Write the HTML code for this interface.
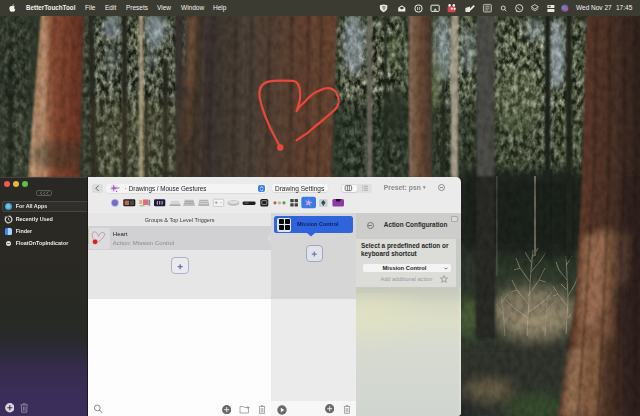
<!DOCTYPE html>
<html><head><meta charset="utf-8">
<style>
*{margin:0;padding:0;box-sizing:border-box}
html,body{width:640px;height:416px;overflow:hidden;background:#2e3a2a;font-family:"Liberation Sans",sans-serif}
.abs{position:absolute}
#bg{position:absolute;left:0;top:0;width:640px;height:416px}
#menubar{position:absolute;left:0;top:0;width:640px;height:16px;background:#3c3b31;color:#f2f2ee;font-size:6.5px;white-space:nowrap}
#menubar span{position:absolute;top:4px;line-height:8px}
#win{position:absolute;left:0;top:177px;width:460.5px;height:239px;border-top-right-radius:5px;border-bottom-right-radius:4px;overflow:hidden}
#side{position:absolute;left:0;top:0;width:88px;height:239px;background:linear-gradient(#292824 0%,#2a2923 33%,#272a23 55%,#272a26 65%,#2c2a36 72%,#362c4e 80%,#3b2d58 90%,#3c2e5c 100%)}
#main{position:absolute;left:88px;top:0;width:373px;height:239px;background:#ebebeb}
.t{position:absolute;white-space:nowrap;line-height:1}
</style></head><body>
<svg id="bg" width="640" height="416" viewBox="0 0 640 416">
<defs>
<filter id="b05" x="-20%" y="-20%" width="140%" height="140%"><feGaussianBlur stdDeviation="0.7"/></filter>
<filter id="b1" x="-20%" y="-5%" width="140%" height="110%"><feGaussianBlur stdDeviation="1.2"/></filter>
<filter id="b2" x="-50%" y="-50%" width="200%" height="200%"><feGaussianBlur stdDeviation="3"/></filter>
<filter id="b3" x="-50%" y="-50%" width="200%" height="200%"><feGaussianBlur stdDeviation="7"/></filter>
<filter id="tex" x="0" y="0" width="100%" height="100%"><feTurbulence type="fractalNoise" baseFrequency="0.18 0.12" numOctaves="2" seed="3"/><feColorMatrix type="matrix" values="0 0 0 0 0  0 0 0 0 0  0 0 0 0 0  0 0 0 -1.6 1.05"/></filter>
<linearGradient id="lt" x1="0" x2="1"><stop offset="0" stop-color="#a88060"/><stop offset="0.08" stop-color="#caa07c"/><stop offset="0.18" stop-color="#b08464"/><stop offset="0.28" stop-color="#c09474"/><stop offset="0.38" stop-color="#9a6244"/><stop offset="0.48" stop-color="#864a32"/><stop offset="0.75" stop-color="#7a402c"/><stop offset="1" stop-color="#643224"/></linearGradient>
<linearGradient id="ct" x1="0" x2="1"><stop offset="0" stop-color="#3e322a"/><stop offset="0.07" stop-color="#46382e"/><stop offset="0.2" stop-color="#3e3630"/><stop offset="0.45" stop-color="#4e4238"/><stop offset="0.62" stop-color="#584234"/><stop offset="0.8" stop-color="#654332"/><stop offset="1" stop-color="#6a4634"/></linearGradient>
<linearGradient id="rt" x1="0" x2="1"><stop offset="0" stop-color="#4a2c20"/><stop offset="0.3" stop-color="#5e3a2a"/><stop offset="0.65" stop-color="#4a3228"/><stop offset="1" stop-color="#30241e"/></linearGradient>
<linearGradient id="rtl" x1="0" x2="1"><stop offset="0" stop-color="#8a6048"/><stop offset="0.4" stop-color="#a87858"/><stop offset="1" stop-color="#5a3a2a"/></linearGradient>
<linearGradient id="t9" x1="0" x2="1"><stop offset="0" stop-color="#8a7058"/><stop offset="0.5" stop-color="#6a4a36"/><stop offset="1" stop-color="#4a3a2e"/></linearGradient>
<filter id="fol" x="0" y="16" width="640" height="162" filterUnits="userSpaceOnUse" color-interpolation-filters="sRGB">
 <feTurbulence type="fractalNoise" baseFrequency="0.22 0.14" numOctaves="3" seed="11" result="n"/>
 <feColorMatrix in="n" type="matrix" values="1.9 0 0 0 -0.575  1.9 0 0 0 -0.56  1.8 0 0 0 -0.59  0 0 0 0 1"/>
</filter>
<mask id="folmask" maskUnits="userSpaceOnUse" x="0" y="0" width="640" height="416">
 <g filter="url(#b3)">
 <rect x="0" y="16" width="30" height="161" fill="#505050"/>
 <rect x="86" y="16" width="100" height="90" fill="#bbb"/>
 <rect x="86" y="100" width="100" height="77" fill="#888"/>
 <rect x="336" y="16" width="72" height="90" fill="#ccc"/>
 <rect x="336" y="100" width="72" height="77" fill="#555"/>
 <rect x="432" y="16" width="46" height="90" fill="#ccc"/>
 <rect x="432" y="100" width="46" height="77" fill="#555"/>
 <rect x="494" y="16" width="92" height="100" fill="#ccc"/>
 <rect x="494" y="110" width="92" height="67" fill="#888"/>
 </g>
</mask>
</defs>
<rect x="0" y="0" width="640" height="416" fill="#2f3a2c"/>
<g filter="url(#b3)">
 <rect x="0" y="16" width="30" height="161" fill="#2c3228"/>
 <rect x="0" y="110" width="28" height="67" fill="#3a4236"/>
 <rect x="86" y="16" width="100" height="161" fill="#404a3c"/>
 <rect x="336" y="16" width="72" height="90" fill="#44503e"/>
 <rect x="336" y="100" width="72" height="77" fill="#283226"/>
 <rect x="432" y="16" width="46" height="90" fill="#4e5a44"/>
 <rect x="432" y="100" width="46" height="77" fill="#2c3628"/>
 <rect x="494" y="20" width="90" height="100" fill="#505c44"/>
 <rect x="494" y="110" width="90" height="67" fill="#3a4632"/>
</g>
<rect x="0" y="16" width="640" height="162" fill="#000" filter="url(#fol)" mask="url(#folmask)" opacity="0.8"/>
<g filter="url(#b2)">
 <ellipse cx="112" cy="28" rx="9" ry="12" fill="#a8b8c8" opacity="0.55"/>
 <ellipse cx="156" cy="30" rx="11" ry="16" fill="#a8b8c8" opacity="0.6"/>
 <ellipse cx="152" cy="55" rx="6" ry="14" fill="#8a9aa4" opacity="0.35"/>
 <ellipse cx="112" cy="60" rx="8" ry="14" fill="#7a8a90" opacity="0.35"/>
 <ellipse cx="354" cy="45" rx="11" ry="30" fill="#a8b8c4" opacity="0.6"/>
 <ellipse cx="443" cy="50" rx="9" ry="34" fill="#a8b8c4" opacity="0.55"/>
 <ellipse cx="557" cy="55" rx="8" ry="36" fill="#b0c0d0" opacity="0.65"/>
 <ellipse cx="535" cy="30" rx="10" ry="12" fill="#a0b4c4" opacity="0.4"/>
 <ellipse cx="468" cy="50" rx="7" ry="24" fill="#a0b0b8" opacity="0.45"/>
 <ellipse cx="518" cy="100" rx="22" ry="34" fill="#7a8860" opacity="0.3"/>
 <ellipse cx="395" cy="110" rx="12" ry="25" fill="#2a3424" opacity="0.8"/>
 
 
</g>
<g filter="url(#b2)">
 <ellipse cx="432" cy="80" rx="10" ry="30" fill="#7a8a5a" opacity="0.45"/>
 <ellipse cx="395" cy="50" rx="8" ry="18" fill="#6a7a52" opacity="0.4"/>
 <ellipse cx="600" cy="20" rx="1" ry="1" fill="#000" opacity="0"/>
</g>
<!-- right-bottom scene -->
<g filter="url(#b3)">
 <rect x="455" y="170" width="130" height="85" fill="#1c231c"/>
 <rect x="455" y="250" width="25" height="60" fill="#2e362c"/>
 <ellipse cx="533" cy="312" rx="46" ry="26" fill="#988c72" opacity="0.8"/>
 <ellipse cx="540" cy="324" rx="30" ry="12" fill="#b0a080" opacity="0.55"/>
 <rect x="455" y="342" width="120" height="80" fill="#32342f"/>
 <rect x="455" y="380" width="22" height="40" fill="#262c2c"/>
 <ellipse cx="469" cy="318" rx="8" ry="18" fill="#58703e"/>
 <ellipse cx="488" cy="390" rx="24" ry="8" fill="#7a6e52" opacity="0.9"/>
 <ellipse cx="535" cy="408" rx="30" ry="12" fill="#38502e"/>
</g>
<g filter="url(#b05)" opacity="0.55">
 <path d="M527 336 L529 300 L531 270 L533 250 M529 305 L517 290 L512 280 M528 296 L539 280 L545 268 M530 282 L520 268 L516 258 M531 272 L541 260 L546 252 M528 318 L514 308 L506 300 M529 312 L545 300 L552 292 M531 262 L525 252 M532 258 L538 248 M517 290 L511 292 M539 280 L546 282 M520 268 L514 270" stroke="#d0c0a0" stroke-width="0.9" fill="none"/>
 <path d="M566 334 L568 300 L567 275 L566 256 M567 306 L558 294 L553 286 M568 296 L575 284 L578 276 M567 280 L559 270 L556 262 M568 318 L576 308 M566 266 L572 256 M567 290 L561 284 M558 294 L553 296" stroke="#d4c4a4" stroke-width="0.9" fill="none"/>
 <path d="M505 336 L503 310 L501 296 M504 316 L496 304 M504 322 L512 312 M502 302 L508 294 M545 336 L546 310 L548 296 M546 318 L538 308 M546 312 L554 302" stroke="#b8a890" stroke-width="0.8" fill="none"/>
 <rect x="534" y="176" width="2" height="80" fill="#a8a08c"/>
 <rect x="496" y="176" width="1.6" height="100" fill="#6a6a5c"/>
</g>
<!-- trunks -->
<g filter="url(#b1)">
 <polygon points="41,14 84,14 80,178 28,178" fill="url(#lt)"/>
 <polygon points="88,14 93,14 97,178 91,178" fill="#2a2a24"/>
 <rect x="163" y="60" width="5" height="118" fill="#2a2a24"/>
 <rect x="122" y="14" width="5" height="164" fill="#2a2a22"/>
 <rect x="139" y="14" width="4" height="164" fill="#b4a686"/>
 <rect x="145" y="96" width="3" height="82" fill="#2e2e28"/>
 <rect x="175" y="14" width="8" height="164" fill="#3a3630"/>
 <polygon points="187,14 337,14 331,178 178,178" fill="url(#ct)"/>
 <rect x="367" y="14" width="5" height="164" fill="#6e6a60"/>
 <rect x="384" y="14" width="3" height="164" fill="#2a2e26"/>
 <rect x="442" y="80" width="3" height="98" fill="#262a22"/>
 <rect x="8" y="60" width="5" height="118" fill="#1e221c" opacity="0.75"/>
 <rect x="409" y="14" width="23" height="164" fill="url(#t9)"/>
 <rect x="451" y="14" width="7" height="164" fill="#aaa290"/>
 <rect x="477" y="14" width="17" height="164" fill="#4e4e48"/><rect x="476" y="176" width="19" height="162" fill="#2a2a26"/>
 <rect x="545" y="14" width="5" height="246" fill="#1e221c"/>
 <rect x="566" y="14" width="6" height="246" fill="#22261e"/>
 <polygon points="587,14 642,14 642,418 558,418 576,296 582,176" fill="url(#rt)"/>
</g>
<g filter="url(#b2)">
 <polygon points="582,236 614,228 612,340 574,345" fill="#9a6c4c" opacity="0.6"/>
 <polygon points="574,345 604,338 600,418 560,418" fill="#a07654" opacity="0.6"/>
 <rect x="622" y="176" width="20" height="242" fill="#2e221c" opacity="0.6"/>
 <polygon points="583,238 606,230 607,300 592,332 579,322" fill="#b08060" opacity="0.55"/>
 <polygon points="568,350 584,345 580,416 561,416" fill="#b08a68" opacity="0.45"/>
 <polygon points="612,236 630,232 628,280 614,290" fill="#8a6048" opacity="0.35"/>
</g>
<g filter="url(#b1)" opacity="0.45">
 <path d="M198 16 L192 177 M214 16 L208 177 M236 16 L233 177 M252 16 L250 177 M270 16 L266 177 M292 16 L290 177 M309 16 L306 177 M322 16 L318 177" stroke="#2a221e" stroke-width="2.2" fill="none"/>
 <path d="M205 16 L200 177 M244 16 L242 177 M282 16 L279 177 M315 16 L312 177" stroke="#7a6250" stroke-width="1.6" fill="none" opacity="0.6"/>
 <path d="M55 16 L42 177 M66 16 L58 177 M74 16 L68 177" stroke="#4a2a20" stroke-width="1.6" fill="none" opacity="0.6"/>
</g>
<g filter="url(#b1)" opacity="0.35">
 <path d="M596 16 L594 176 L586 300 L578 416 M610 16 L609 176 L604 300 L598 416 M624 16 L624 176 L620 300 L616 416 M636 16 L636 416" stroke="#24180f" stroke-width="2.4" fill="none"/>
</g>
<g filter="url(#b2)">
 <polygon points="189,16 197,16 193,90 186,90" fill="#a07048" opacity="0.55"/>
 <polygon points="185,95 194,95 190,140 183,140" fill="#6a4a34" opacity="0.6"/>
</g>
<g filter="url(#b3)">
 <rect x="90" y="100" width="90" height="77" fill="#7a6a38" opacity="0.18"/>
</g>
<!-- branches across left trunk -->
<g filter="url(#b2)">
 <ellipse cx="60" cy="155" rx="30" ry="14" fill="#2a3424" opacity="0.35"/>
 
</g>
<rect x="0" y="16" width="640" height="400" filter="url(#tex)" opacity="0.25"/>
<path d="M280.3 147.5 L276 139.3 C270 128 262 110 259.7 98 C258.5 90 261 84 267.3 81.9 C274 80 286 80.5 293.3 80.8 C298 81.5 300 86 300.2 93.8 C300.3 100 298.5 106 296.5 111.1 C299 107 302 104 305.2 101.4 C309 97 313 93.5 317.1 91.6 C322 89 327 87.5 330.1 88.4 C334 89.5 337 92 336.6 93.8 C338.5 97 339 100 338.7 102.5 C338 106 336.5 108.5 334.4 110 C329 115 324 119 319.3 123 C314 127 310 131 306.3 133.9 C302 136.5 299 138.5 296.5 140.3" fill="none" stroke="#e8473b" stroke-width="2.2" stroke-linecap="round" stroke-linejoin="round"/>
<circle cx="280.3" cy="147.5" r="3.2" fill="#e8473b"/>
</svg>

<div id="menubar">
<svg style="position:absolute;left:9.3px;top:3.6px" width="6.8" height="8.2" viewBox="0 0 10 12"><path d="M5 3.3 C5.9 2.8 7.5 2.6 8.6 3.8 C7.6 4.5 7.3 5.9 7.9 7 C8.3 7.7 8.9 8.1 9.3 8.2 C8.9 9.4 7.9 11.4 6.8 11.4 C6 11.4 5.8 10.9 5 10.9 C4.2 10.9 3.9 11.4 3.2 11.4 C2 11.4 0.5 8.8 0.5 6.7 C0.5 4.2 2.1 3 3.4 3 C4.2 3 4.6 3.4 5 3.3 Z M5 2.7 C4.9 1.5 5.9 0.3 7.1 0.2 C7.2 1.5 6.2 2.7 5 2.7 Z" fill="#f4f4f0"/></svg>
<span style="left:26px;font-weight:bold;font-size:6.3px">BetterTouchTool</span>
<span style="left:85px">File</span>
<span style="left:105px">Edit</span>
<span style="left:126px">Presets</span>
<span style="left:157px">View</span>
<span style="left:181px">Window</span>
<span style="left:213px">Help</span>
<svg style="position:absolute;left:370px;top:0" width="205" height="16" viewBox="370 0 205 16">
 <path d="M379.8 5.2 L383.6 4.4 L387.4 5.2 L387.2 8.6 C386.8 10.4 385.2 11.6 383.6 12.2 C382 11.6 380.4 10.4 380 8.6 Z" fill="#e8e8e4"/>
 <path d="M381.6 6.2 L383.6 5.8 L385.6 6.2 L385.4 8.4 C385.1 9.4 384.4 10.2 383.6 10.6 Z" fill="#9a9a94"/>
 <path d="M398.2 7.8 L401.8 5.2 L405.3 7.8 L405.3 11.4 L398.2 11.4 Z" fill="#ecece8"/>
 <path d="M399.4 8 L401.8 6.4 L404.2 8 L401.8 9.4 Z" fill="#3c3b31"/>
 <circle cx="418.5" cy="8.5" r="3.5" fill="none" stroke="#dcdcd8" stroke-width="1.1"/>
 <path d="M417.6 7 L417.6 10 M419.4 7 L419.4 10" stroke="#dcdcd8" stroke-width="0.8"/>
 <rect x="431" y="5.2" width="8.2" height="6.2" rx="0.8" fill="none" stroke="#ecece8" stroke-width="1"/>
 <path d="M433.6 10.4 L435.2 8.2 L436.8 10.4" fill="#ecece8"/>
 <rect x="447.6" y="6.6" width="8" height="5.6" rx="1.2" fill="#d84848"/>
 <circle cx="449.6" cy="5.4" r="1.3" fill="#f0f0f0"/><circle cx="453.8" cy="5.4" r="1.3" fill="#f0f0f0"/><circle cx="451.8" cy="8.6" r="1.2" fill="#f4d0d0"/><circle cx="454.6" cy="8.8" r="1.1" fill="#f0f0f0"/>
 <path d="M465.4 8 L470 6.4 L470 12 L465.4 12 Z" fill="#e4e4e0"/>
 <path d="M469.2 9.6 L473.6 5 L474.8 6.2 L470.4 10.8 Z" fill="#f0f0ec"/>
 <rect x="483.4" y="4.4" width="8" height="7.6" rx="1" fill="#5a5850" stroke="#cfcfc8" stroke-width="0.8"/>
 <path d="M485.4 6.4 L489.4 6.4 M485.4 8.2 L489.4 8.2 M485.4 10 L488 10" stroke="#c8c8c0" stroke-width="0.6"/>
 <circle cx="503.2" cy="8" r="2" fill="none" stroke="#e8e8e4" stroke-width="0.9"/>
 <path d="M504.7 9.5 L506.4 11.2" stroke="#e8e8e4" stroke-width="0.9"/>
 <circle cx="519.2" cy="8.2" r="3.6" fill="none" stroke="#e8e8e4" stroke-width="0.9"/>
 <path d="M515.8 11.8 L516.4 10.2 L517.6 11.2 Z" fill="#e8e8e4"/>
 <path d="M517.8 7.2 C518 8.6 519.2 9.6 520.6 9.6" stroke="#e8e8e4" stroke-width="0.7" fill="none"/>
 <path d="M534.8 4.6 L538.4 6.8 L534.8 9 L531.2 6.8 Z" fill="none" stroke="#e8e8e4" stroke-width="0.8"/>
 <path d="M531.4 8.6 L534.8 10.8 L538.2 8.6" fill="none" stroke="#e8e8e4" stroke-width="0.8"/>
 <rect x="547.4" y="5" width="7" height="3" rx="0.6" fill="#e8e8e4"/>
 <rect x="547.4" y="9" width="7" height="3" rx="0.6" fill="#e8e8e4"/>
 <rect x="548.6" y="5.8" width="2" height="1.4" fill="#3c3b31"/>
 <circle cx="564.8" cy="8.2" r="3.6" fill="#7a5aa8"/>
 <circle cx="563.8" cy="7.4" r="2" fill="#4aa0d8" opacity="0.7"/>
 <circle cx="566" cy="9" r="1.8" fill="#d85a8a" opacity="0.7"/>
</svg>
<span style="left:576px">Wed Nov 27</span>
<span style="left:616px">17:45</span>
</div>

<div id="win">
<div id="side">
 <div class="abs" style="left:0;top:0;width:88px;height:1px;background:rgba(255,255,255,0.12)"></div>
 <div class="abs" style="left:3.6px;top:3.5px;width:6px;height:6px;border-radius:50%;background:#ee5a52"></div>
 <div class="abs" style="left:13px;top:3.5px;width:6px;height:6px;border-radius:50%;background:#e9b63a"></div>
 <div class="abs" style="left:22.4px;top:3.5px;width:6px;height:6px;border-radius:50%;background:#5cc144"></div>
 <div class="abs" style="left:35.5px;top:12.8px;width:16px;height:6.4px;border:0.7px solid #5a5955;border-radius:2px"></div>
 <svg class="abs" style="left:35.5px;top:12.8px" width="16" height="6.4" viewBox="0 0 16 6.4"><path d="M6.2 1.5 L4.2 3.2 L6.2 4.9 M9.4 1.5 L7.4 3.2 L9.4 4.9 M12.6 1.5 L10.6 3.2 L12.6 4.9" stroke="#8a8982" stroke-width="0.7" fill="none"/></svg>
 <div class="abs" style="left:1.5px;top:23.5px;width:90px;height:11.2px;background:#302f2b;border:0.7px solid #46453f;border-radius:2px"></div>
 <div class="abs" style="left:4.6px;top:25.7px;width:7.6px;height:7.6px;border-radius:50%;background:radial-gradient(circle at 45% 45%,#8ad0e8 0,#4ab0d8 45%,#2a78a8 100%)"></div>
 <div class="t" style="left:15.7px;top:26.8px;font-size:5.4px;font-weight:bold;color:#ecebe6">For All Apps</div>
 <svg class="abs" style="left:3.5px;top:37.8px" width="9" height="9" viewBox="0 0 9 9"><path d="M2.2 2.2 A3.3 3.3 0 1 0 4.5 1.2" stroke="#cfcfc8" stroke-width="1.3" fill="none"/><path d="M1.2 1.4 L2.6 2.8 L3.2 1" stroke="#dcdcd6" stroke-width="0.8" fill="none"/><path d="M4.5 2.8 L4.5 4.6 L5.8 5.6" stroke="#dcdcd6" stroke-width="0.8" fill="none"/></svg>
 <div class="t" style="left:15.7px;top:40px;font-size:5.4px;font-weight:bold;color:#ecebe6">Recently Used</div>
 <div class="abs" style="left:4.5px;top:50.5px;width:7px;height:7px;border-radius:1.5px;background:linear-gradient(90deg,#3d8ef0 50%,#a8cff8 50%)"></div>
 <div class="t" style="left:15.7px;top:51.7px;font-size:5.4px;font-weight:bold;color:#ecebe6">Finder</div>
 <div class="abs" style="left:5.9px;top:63.8px;width:5px;height:5px;border-radius:50%;background:#e0e0dc"></div>
 <div class="abs" style="left:7.2px;top:66.1px;width:2.4px;height:0.5px;background:#777"></div>
 <div class="t" style="left:15.7px;top:64px;font-size:5.4px;font-weight:bold;color:#ecebe6">FloatOnTopIndicator</div>
 <svg class="abs" style="left:4.6px;top:226.1px" width="9.6" height="9.6" viewBox="0 0 9.6 9.6"><circle cx="4.8" cy="4.8" r="4.7" fill="#d8d4e2"/><path d="M4.8 2.3 L4.8 7.3 M2.3 4.8 L7.3 4.8" stroke="#3a3050" stroke-width="1.1"/></svg>
 <svg class="abs" style="left:19.8px;top:226.3px" width="8.4" height="10" viewBox="0 0 8.4 10"><path d="M0.5 1.8 L7.9 1.8 M2.8 1.6 L3.2 0.7 L5.2 0.7 L5.6 1.6 M1.3 2.2 L1.7 9.2 L6.7 9.2 L7.1 2.2 M3.4 3.4 L3.4 7.8 M5 3.4 L5 7.8" stroke="#9a94b0" stroke-width="0.8" fill="none"/></svg>
 <div class="abs" style="left:87px;top:0;width:1px;height:239px;background:#1a1a18"></div>
</div>
<div id="main">
 <!-- toolbar -->
 <div class="abs" style="left:4px;top:7px;width:11px;height:8.5px;border-radius:2.5px;background:#dcdcdc"></div>
 <svg class="abs" style="left:4px;top:7px" width="11" height="8.5" viewBox="0 0 11 8.5"><path d="M6.3 1.8 L3.9 4.25 L6.3 6.7" stroke="#555" stroke-width="0.9" fill="none" stroke-linecap="round" stroke-linejoin="round"/></svg>
 <div class="abs" style="left:18px;top:6.6px;width:161px;height:9.4px;border-radius:3px;background:#f4f4f4;box-shadow:0 0.5px 0.5px rgba(0,0,0,0.12)"></div>
 <svg class="abs" style="left:18px;top:6px" width="16" height="12" viewBox="106 183 16 12"><circle cx="113.8" cy="188.2" r="3.6" fill="#f0c8f4" opacity="0.6"/><path d="M113.8 184.6 L114.7 187.3 L117.4 188.2 L114.7 189.1 L113.8 191.8 L112.9 189.1 L110.2 188.2 L112.9 187.3 Z" fill="#9a68c4"/><path d="M115 188.1 L119.6 187.9" stroke="#8a70a8" stroke-width="0.9"/><circle cx="116.6" cy="191.4" r="0.6" fill="#7a6a8a"/></svg>
 <div class="t" style="left:36.5px;top:9px;font-size:6.3px;color:#777">&#183;</div>
 <div class="t" style="left:40.8px;top:8.8px;font-size:6.3px;color:#262626">Drawings / Mouse Gestures</div>
 <div class="abs" style="left:169.7px;top:7.6px;width:7.5px;height:7.6px;border-radius:2px;background:#3a80f0"></div>
 <svg class="abs" style="left:169.7px;top:7.6px" width="7.5" height="7.6" viewBox="0 0 7.5 7.6"><path d="M2.2 3 L3.75 1.6 L5.3 3 M2.2 4.6 L3.75 6 L5.3 4.6" stroke="#fff" stroke-width="0.8" fill="none"/></svg>
 <div class="abs" style="left:183.6px;top:7px;width:56.2px;height:8.4px;border-radius:2.5px;background:#f6f6f6;box-shadow:0 0.5px 0.8px rgba(0,0,0,0.18)"></div>
 <div class="t" style="left:187px;top:8.8px;font-size:6.5px;color:#2a2a2a">Drawing Settings</div>
 <div class="abs" style="left:253px;top:7px;width:31.3px;height:8.6px;border-radius:2.5px;background:#e0e0e0"></div>
 <div class="abs" style="left:253.5px;top:7.5px;width:15px;height:7.6px;border-radius:2px;background:#f8f8f8;box-shadow:0 0.5px 0.8px rgba(0,0,0,0.15)"></div>
 <svg class="abs" style="left:253px;top:7px" width="32" height="9" viewBox="341 184 32 9"><rect x="345.2" y="185.6" width="6.4" height="5" rx="1" fill="none" stroke="#555" stroke-width="0.8"/><path d="M347.4 185.8 L347.4 190.4 M349.4 185.8 L349.4 190.4" stroke="#555" stroke-width="0.7"/><path d="M362.2 186.2 L363.4 186.2 M362.2 188.2 L363.4 188.2 M362.2 190.2 L363.4 190.2 M364.2 186.2 L367.8 186.2 M364.2 188.2 L367.8 188.2 M364.2 190.2 L367.8 190.2" stroke="#9a9a9a" stroke-width="0.8"/></svg>
 <div class="t" style="left:295.8px;top:7.5px;font-size:6.8px;font-weight:bold;color:#8a8a8a">Preset: psn <span style="font-size:4.5px;position:relative;top:-0.5px">&#9662;</span></div>
 <div class="abs" style="left:350px;top:6.8px;width:7px;height:7px;border-radius:50%;border:0.7px solid #8a8a8a"></div>
 <div class="abs" style="left:351.8px;top:10px;width:3.4px;height:0.7px;background:#8a8a8a"></div>
 <!-- icon row y center 26 -->
 <svg class="abs" style="left:0;top:0" width="372" height="36" viewBox="88 177 372 36">
  <circle cx="114.9" cy="202.8" r="3.9" fill="#b4b2e4"/>
  <circle cx="114.9" cy="202.8" r="3.1" fill="#7270c4"/>
  <rect x="123.3" y="199.3" width="12" height="7" rx="1.2" fill="#1c1a1a"/>
  <rect x="124.6" y="200.5" width="4.4" height="4.6" fill="#b86a50"/>
  <rect x="129.6" y="200.5" width="4.4" height="4.6" fill="#4a4a44"/>
  <rect x="138.6" y="199" width="12" height="7.5" rx="0.8" fill="#ece6e4"/>
  <rect x="139.2" y="200" width="3" height="4" fill="#e8b070"/>
  <rect x="143" y="199.5" width="5.5" height="5.5" fill="#d87080"/>
  <rect x="148.6" y="199.8" width="1.6" height="6" fill="#8088b0"/>
  <rect x="139.5" y="205.3" width="5" height="1" fill="#7ac070"/>
  <rect x="154" y="199.3" width="11.3" height="7" rx="1.2" fill="#1e1a32"/>
  <rect x="156.8" y="201" width="1" height="3.6" fill="#c8c0e0"/>
  <rect x="159.2" y="201" width="1" height="3.6" fill="#c8c0e0"/>
  <rect x="161.6" y="201" width="1" height="3.6" fill="#c8c0e0"/>
  <path d="M170 205.5 L171 201 L179 200.8 L180.3 205.5 Z" fill="#d4d4d4"/>
  <rect x="169.5" y="204.6" width="11" height="1.2" fill="#9a9a9a"/>
  <path d="M183.2 205.9 L184.8 199.8 L193.4 199.8 L195 205.9 Z" fill="#bcbcbc"/>
  <rect x="185" y="201" width="8.5" height="0.6" fill="#a0a0a0"/>
  <rect x="184.5" y="203" width="9.5" height="0.6" fill="#a0a0a0"/>
  <path d="M198.2 205.9 L199.5 199.8 L208 199.8 L209.4 205.9 Z" fill="#b4b4b4"/>
  <rect x="199.8" y="201.2" width="7.8" height="0.7" fill="#e0e0e0"/>
  <rect x="199.4" y="203.2" width="8.6" height="0.7" fill="#e0e0e0"/>
  <rect x="213.3" y="199.2" width="10.4" height="7.2" rx="1" fill="#f4f4f4" stroke="#b4b4b4" stroke-width="0.6"/>
  <path d="M216.2 201 L216.2 204.2 M214.6 202.6 L217.8 202.6 M221 202 L221 203.4" stroke="#8a8a8a" stroke-width="0.6"/>
  <ellipse cx="233.4" cy="203" rx="6" ry="2.7" fill="#b8b8b8"/>
  <ellipse cx="233.4" cy="202.3" rx="5.2" ry="1.6" fill="#dedede"/>
  <rect x="242.6" y="201.5" width="13" height="3.4" rx="1.4" fill="#1e1e1e"/>
  <rect x="244.5" y="202.6" width="4" height="1" fill="#6a6a6a"/>
  <rect x="260.3" y="198.9" width="8" height="7.7" rx="1.6" fill="#1e1e1e"/>
  <rect x="261.8" y="200.6" width="5" height="4" rx="0.5" fill="none" stroke="#d0d0d0" stroke-width="0.6"/>
  <circle cx="275" cy="202.8" r="1.6" fill="#b86050"/>
  <circle cx="279.5" cy="202.8" r="1.6" fill="#c8b080"/>
  <circle cx="284" cy="202.8" r="1.6" fill="#5a9a50"/>
  <rect x="290.3" y="198.9" width="3.4" height="3.4" rx="0.6" fill="#444"/>
  <rect x="294.6" y="198.9" width="3.4" height="3.4" rx="0.6" fill="#444"/>
  <rect x="290.3" y="203.2" width="3.4" height="3.4" rx="0.6" fill="#444"/>
  <rect x="294.6" y="203.2" width="3.4" height="3.4" rx="0.6" fill="#444"/>
  <rect x="301.3" y="196.8" width="14.7" height="11.5" rx="2" fill="#3a7ae6"/>
  <path d="M308.6 198.6 L309.5 201.6 L312.8 202.2 L310 203.6 L310.6 206.6 L308.4 204.4 L305.4 205.6 L307 203 L305.2 200.2 L308 201.4 Z" fill="#d8a0f0"/>
  <rect x="319" y="199" width="8.6" height="8" rx="1.5" fill="#c8d0d4"/>
  <path d="M323.3 200 L325.5 202.5 L323.3 206 L321.1 202.5 Z" fill="#3a4850"/>
  <rect x="332.4" y="198.9" width="11.6" height="7.7" rx="1.5" fill="#8e3aa6"/>
  <path d="M335.6 198.9 L340.8 198.9 L340 201.4 L336.4 201.4 Z" fill="#1a1020"/>
 </svg>
 <div class="abs" style="left:0;top:35.5px;width:372px;height:0.6px;background:#d6d6d6"></div>
 <!-- left column -->
 <div class="abs" style="left:0;top:36px;width:183px;height:86px;background:#e6e6e6"></div>
 <div class="abs" style="left:0;top:122px;width:183px;height:117px;background:#fdfdfd"></div>
 <div class="t" style="left:56.8px;top:41.2px;font-size:5.5px;color:#3a3a3a">Groups &amp; Top Level Triggers</div>
 <div class="abs" style="left:0;top:49px;width:183px;height:23.7px;background:#d1d1d4"></div>
 <div class="abs" style="left:0px;top:52.4px;width:0.8px;height:15px;background:#a8d080;opacity:0.8"></div>
 <div class="abs" style="left:0.6px;top:51px;width:21.6px;height:20.5px;border-radius:2.5px;background:#dcdce0"></div>
 <svg class="abs" style="left:0;top:50px" width="22" height="22" viewBox="0 0 22 22"><path d="M7.1 14.8 C5.6 12.5 3.6 9.5 4.2 6.8 C4.8 4.6 7 4.2 8.4 5.6 C9.4 6.6 10.2 8 10.5 9.4 C11.2 7.6 12.6 5.6 14.4 5.4 C16 5.3 16.8 6.4 16.5 7.8 C16 10.4 13 13 10.1 15" fill="none" stroke="#b07878" stroke-width="0.6"/><circle cx="7.1" cy="14.8" r="2.9" fill="#f0a0a0" opacity="0.5"/><circle cx="7.1" cy="14.8" r="2.4" fill="#d02424"/></svg>
 <div class="t" style="left:24.8px;top:53.8px;font-size:6px;color:#222">Heart</div>
 <div class="t" style="left:24.8px;top:63.4px;font-size:6px;color:#8a8a8a">Action: Mission Control</div>
 <div class="abs" style="left:82.6px;top:79.8px;width:18.2px;height:17.6px;border-radius:4px;border:1px solid #aab2cc;background:#ebebef"></div>
 <svg class="abs" style="left:82.6px;top:79.8px" width="18.2" height="17.6" viewBox="0 0 18.2 17.6"><path d="M9.2 7.2 L9.2 12.2 M6.7 9.7 L11.7 9.7" stroke="#6272b0" stroke-width="1.3"/></svg>
 <!-- middle column -->
 <div class="abs" style="left:183px;top:36px;width:85px;height:86px;background:#d6d6d6"></div>
 <div class="abs" style="left:183px;top:122px;width:85px;height:102px;background:#ebebeb"></div>
 <div class="abs" style="left:183px;top:224px;width:85px;height:15px;background:#f7f7f7"></div>
 <svg class="abs" style="left:179px;top:56px" width="6" height="10" viewBox="0 0 6 10"><path d="M4 0 L0 5 L4 10 Z" fill="#d9d9d9"/></svg>
 <div class="abs" style="left:186.4px;top:39.3px;width:78.4px;height:16.8px;border-radius:2.5px;background:#2f64dc"></div>
 <svg class="abs" style="left:218.6px;top:55.8px" width="8" height="4" viewBox="0 0 8 4"><path d="M0 0 L4 3.5 L8 0 Z" fill="#2f64dc"/></svg>
 <div class="abs" style="left:189.2px;top:40.8px;width:13.6px;height:13.8px;border-radius:2px;background:#dfe4f0"></div>
 <div class="abs" style="left:190.7px;top:42.3px;width:5px;height:5px;background:#000;border-radius:0.8px"></div>
 <div class="abs" style="left:196.5px;top:42.3px;width:5px;height:5px;background:#000;border-radius:0.8px"></div>
 <div class="abs" style="left:190.7px;top:48.1px;width:5px;height:5px;background:#000;border-radius:0.8px"></div>
 <div class="abs" style="left:196.5px;top:48.1px;width:5px;height:5px;background:#000;border-radius:0.8px"></div>
 <div class="t" style="left:209px;top:45.2px;font-size:5.5px;font-weight:bold;color:#0e1e5a">Mission Control</div>
 <div class="abs" style="left:218px;top:67.7px;width:16.5px;height:17px;border-radius:4px;border:1px solid #a0a8c0;background:#e2e3ea"></div>
 <svg class="abs" style="left:218px;top:67.7px" width="16.5" height="17" viewBox="0 0 16.5 17"><path d="M8.3 6.6 L8.3 11.6 M5.8 9.1 L10.8 9.1" stroke="#6a78a8" stroke-width="1.2"/></svg>
 <!-- right panel -->
 <div class="abs" style="left:268px;top:36px;width:105px;height:203px;background:linear-gradient(#cdcdcb 0%,#cdcdcb 36%,#c6cabb 36.5%,#cacdbd 40%,#d6d8c5 45%,#dcdec8 53%,#d6dad0 67%,#d0d5d0 100%)"></div>
 <div class="abs" style="left:369.5px;top:110px;width:3px;height:129px;background:linear-gradient(90deg,rgba(255,255,255,0),rgba(255,255,255,0.25))"></div>
 <div class="abs" style="left:268px;top:116px;width:105px;height:80px;background:radial-gradient(ellipse 60px 40px at 15px 20px,rgba(230,230,190,0.45),rgba(230,230,190,0))"></div>
 <div class="abs" style="left:268px;top:36px;width:105px;height:26px;background:#cdcdcb"></div>
 <div class="abs" style="left:268px;top:62px;width:100px;height:48px;background:#dcdcd9"></div>
 <div class="abs" style="left:368px;top:62px;width:5px;height:48px;background:#c9c9c7"></div>
  <div class="abs" style="left:278.5px;top:45px;width:7px;height:7px;border-radius:50%;border:0.7px solid #777"></div>
 <div class="abs" style="left:280.3px;top:48.2px;width:3.4px;height:0.7px;background:#777"></div>
 <div class="t" style="left:295.8px;top:44.8px;font-size:6.4px;font-weight:bold;color:#2a2a2a">Action Configuration</div>
 <div class="abs" style="left:363px;top:38.8px;width:7px;height:6px;border:0.6px solid #aaa;border-radius:1px;background:#d8d8d8"></div>
 <div class="t" style="left:273px;top:65.4px;font-size:6.4px;font-weight:bold;color:#262626;line-height:8px">Select a predefined action or<br>keyboard shortcut</div>
 <div class="abs" style="left:275.2px;top:87px;width:87.8px;height:8.4px;border-radius:2px;background:#f4f4f4"></div>
 <div class="t" style="left:294.5px;top:88.6px;font-size:5.8px;font-weight:bold;color:#222">Mission Control</div>
 <svg class="abs" style="left:356px;top:89.5px" width="4" height="3" viewBox="0 0 4 3"><path d="M0.5 0.7 L2 2.2 L3.5 0.7" stroke="#444" stroke-width="0.7" fill="none"/></svg>
 <div class="t" style="left:292.5px;top:100.2px;font-size:5.6px;color:#9a9a9a">Add additional action</div>
 <svg class="abs" style="left:352.4px;top:98px" width="8" height="8" viewBox="0 0 10 10"><path d="M5 0.8 L6.2 3.8 L9.4 3.9 L6.9 6 L7.8 9.2 L5 7.4 L2.2 9.2 L3.1 6 L0.6 3.9 L3.8 3.8 Z" stroke="#777" stroke-width="0.7" fill="none"/></svg>
 <!-- bottom bar icons y center 232 -->
 <svg class="abs" style="left:6px;top:227px" width="10" height="10" viewBox="0 0 10 10"><circle cx="3.3" cy="3.9" r="2.9" stroke="#7a7a7a" stroke-width="0.9" fill="none"/><path d="M5.4 6 L8.4 9" stroke="#7a7a7a" stroke-width="1"/></svg>
 <svg class="abs" style="left:133.9px;top:227.6px" width="9.4" height="9.4" viewBox="0 0 9.4 9.4"><circle cx="4.7" cy="4.7" r="4.65" fill="#6a6a6a"/><path d="M4.7 2.2 L4.7 7.2 M2.2 4.7 L7.2 4.7" stroke="#e8e8e8" stroke-width="1"/></svg>
 <svg class="abs" style="left:151px;top:227.5px" width="12" height="9" viewBox="0 0 12 9"><path d="M1 1.5 L4.5 1.5 L5.5 2.5 L9.5 2.5 L9.5 8 L1 8 Z" stroke="#888" stroke-width="0.7" fill="none"/><path d="M9 1 L9 4 M7.5 2.5 L10.5 2.5" stroke="#888" stroke-width="0.7"/></svg>
 <svg class="abs" style="left:170px;top:227.5px" width="8" height="9" viewBox="0 0 8 9"><path d="M0.8 1.5 L7.2 1.5 M3 1.5 L3 0.6 L5 0.6 L5 1.5 M1.5 2 L1.5 8.4 L6.5 8.4 L6.5 2 M3.2 3 L3.2 7.4 M4.8 3 L4.8 7.4" stroke="#888" stroke-width="0.7" fill="none"/></svg>
 <svg class="abs" style="left:189.4px;top:227.6px" width="10" height="10" viewBox="0 0 10 10"><circle cx="5" cy="5" r="4.7" fill="#6a6a6a"/><path d="M3.8 2.8 L7.2 5 L3.8 7.2 Z" fill="#fff"/></svg>
 <svg class="abs" style="left:236.8px;top:227.4px" width="9.4" height="9.4" viewBox="0 0 9.4 9.4"><circle cx="4.7" cy="4.7" r="4.65" fill="#6a6a6a"/><path d="M4.7 2.2 L4.7 7.2 M2.2 4.7 L7.2 4.7" stroke="#e8e8e8" stroke-width="1"/></svg>
 <svg class="abs" style="left:255px;top:227.5px" width="8" height="9" viewBox="0 0 8 9"><path d="M0.8 1.5 L7.2 1.5 M3 1.5 L3 0.6 L5 0.6 L5 1.5 M1.5 2 L1.5 8.4 L6.5 8.4 L6.5 2 M3.2 3 L3.2 7.4 M4.8 3 L4.8 7.4" stroke="#888" stroke-width="0.7" fill="none"/></svg>
</div>
</div>
</body></html>
